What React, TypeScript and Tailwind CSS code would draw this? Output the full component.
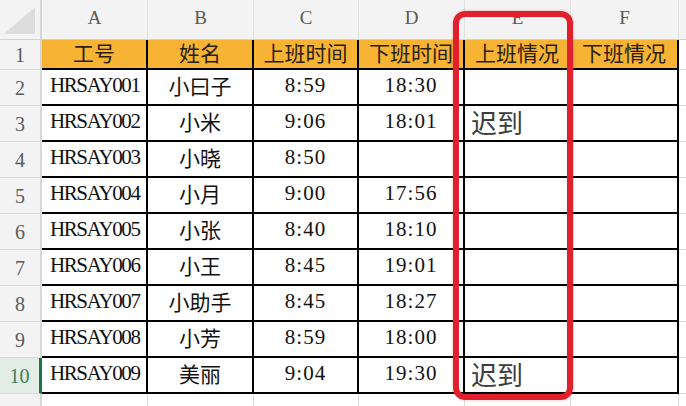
const cols = [
  { key: "A", w: "w-[106px]", align: "justify-start pl-2" },
  { key: "B", w: "w-[106px]", align: "justify-center" },
  { key: "C", w: "w-[105px]", align: "justify-center" },
  { key: "D", w: "w-[106px]", align: "justify-center" },
  { key: "E", w: "w-[106px]", align: "justify-start pl-1.5" },
  { key: "F", w: "w-[108px]", align: "justify-center" },
];

const headers = ["工号", "姓名", "上班时间", "下班时间", "上班情况", "下班情况"];

const rows = [
  ["HRSAY001", "小曰子", "8:59", "18:30", "", ""],
  ["HRSAY002", "小米", "9:06", "18:01", "迟到", ""],
  ["HRSAY003", "小晓", "8:50", "", "", ""],
  ["HRSAY004", "小月", "9:00", "17:56", "", ""],
  ["HRSAY005", "小张", "8:40", "18:10", "", ""],
  ["HRSAY006", "小王", "8:45", "19:01", "", ""],
  ["HRSAY007", "小助手", "8:45", "18:27", "", ""],
  ["HRSAY008", "小芳", "8:59", "18:00", "", ""],
  ["HRSAY009", "美丽", "9:04", "19:30", "迟到", ""],
];

const font = "font-['Liberation_Serif','Noto_Sans_CJK_SC',serif]";

function RowHead({ n, active = false, h }: { n: number; active?: boolean; h: string }) {
  return (
    <div
      className={`${h} flex w-[42px] shrink-0 items-center justify-center border-b border-[#dadada] text-[20px] ${
        active
          ? "border-r-[3px] border-r-[#217346] bg-[#e2ede6] text-[#3e7c5b]"
          : "border-r-2 border-r-[#d6d6d6] bg-[#f3f3f3] text-[#5c5c5c]"
      }`}
    >
      {n}
    </div>
  );
}

export default function App() {
  return (
    <div className={`relative h-[406px] w-[686px] overflow-hidden bg-white ${font}`}>
      {/* column letters */}
      <div className="flex h-[40px] border-b border-[#d2d2d2] bg-[#f3f3f3]">
        <div className="flex w-[42px] shrink-0 items-end justify-end border-r-2 border-[#d6d6d6] pb-[5px] pr-[5px]">
          <svg width="31" height="27" viewBox="0 0 31 27">
            <polygon points="31,0 31,27 0,27" fill="#dcdcdc" />
          </svg>
        </div>
        {cols.map((c) => (
          <div
            key={c.key}
            className={`${c.w} flex shrink-0 items-center justify-center border-r border-[#e0e0e0] pb-0.5 text-[19px] text-[#5a5a5a]`}
          >
            {c.key}
          </div>
        ))}
        <div className="flex-1" />
      </div>

      {/* row 1: headers */}
      <div className="flex h-[30px]">
        <RowHead n={1} h="h-[30px]" />
        {cols.map((c, i) => (
          <div
            key={c.key}
            className={`${c.w} flex shrink-0 items-center justify-center border-b-2 border-r-2 border-black bg-[#f7b334] text-[21px] leading-none text-[#2a1e0c]`}
          >
            {headers[i]}
          </div>
        ))}
        <div className="flex-1 border-b border-[#dadada]" />
      </div>

      {/* data rows */}
      {rows.map((r, ri) => (
        <div key={ri} className="flex h-[36px]">
          <RowHead n={ri + 2} active={ri === rows.length - 1} h="h-[36px]" />
          {cols.map((c, ci) => {
            const v = r[ci];
            const late = ci === 4 && v;
            return (
              <div
                key={c.key}
                className={`${c.w} ${c.align} flex shrink-0 items-center border-b-2 border-r-2 border-black leading-none ${
                  late ? "pt-1 text-[26px] text-[#3c3c3c]" : "text-[21px] text-[#111]"
                } ${ci === 0 ? "pb-1 tracking-[-1.4px]" : ""} ${ci === 2 || ci === 3 ? "pb-1 tracking-[1px]" : ""}`}
              >
                {v}
              </div>
            );
          })}
          <div className="flex-1 border-b border-[#dadada]" />
        </div>
      ))}

      {/* trailing empty row */}
      <div className="flex h-[12px]">
        <div className="w-[42px] shrink-0 border-r-2 border-[#d6d6d6] bg-[#f3f3f3]" />
        {cols.map((c) => (
          <div key={c.key} className={`${c.w} shrink-0 border-r border-[#dadada]`} />
        ))}
      </div>

      {/* red highlight around column E */}
      <div className="pointer-events-none absolute left-[453px] top-[11px] h-[389px] w-[120px] rounded-[12px] border-[6px] border-[#e1202d] shadow-[0_0_3px_rgba(225,32,45,0.35)]" />
    </div>
  );
}
